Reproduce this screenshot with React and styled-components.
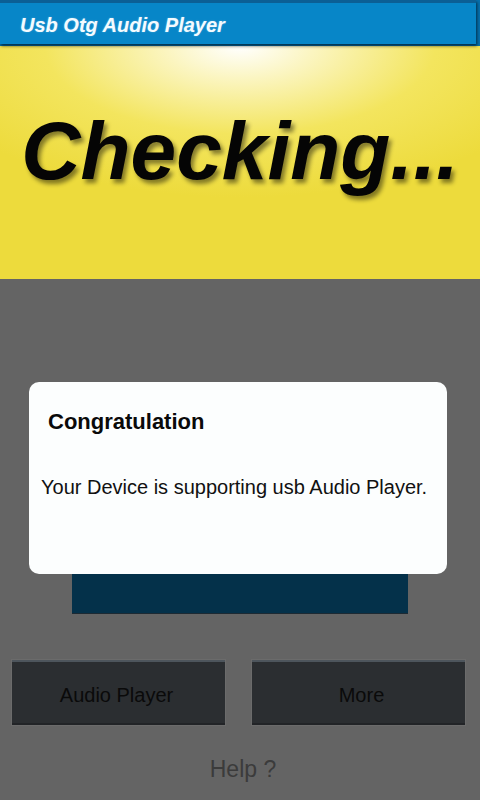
import styled, { createGlobalStyle } from "styled-components";

const GlobalStyle = createGlobalStyle`
  html, body {
    margin: 0;
    padding: 0;
    background: #646464;
  }
  * {
    box-sizing: border-box;
  }
`;

const Screen = styled.div`
  position: relative;
  width: 480px;
  height: 800px;
  overflow: hidden;
  background: #646464;
  font-family: "Liberation Sans", Arial, sans-serif;
  display: flex;
  flex-direction: column;
`;

const TitleWrap = styled.div`
  height: 46px;
  background: #0570ae;
  position: relative;
  z-index: 2;
`;

const TitleBar = styled.header`
  height: 44px;
  margin-right: 4px;
  background: #0786c8;
  border-top: 3px solid #0b5f95;
  box-shadow: 1px 2px 3px rgba(0, 0, 0, 0.6);
  display: flex;
  align-items: center;
  padding: 3px 0 0 20px;
`;

const Title = styled.h1`
  margin: 0;
  font-size: 20px;
  font-weight: bold;
  font-style: italic;
  color: #f4fbff;
  text-shadow: 0 0 2px rgba(255, 255, 255, 0.3);
`;

const Banner = styled.div`
  height: 233px;
  background: radial-gradient(
    ellipse 70% 65% at 50% 0%,
    #ffffff 0%,
    #fbf5c0 22%,
    #f3e55e 58%,
    #eddb3c 100%
  ),
    #eddb3c;
  display: flex;
  align-items: center;
  justify-content: center;
`;

const BannerText = styled.div`
  font-size: 82px;
  font-weight: bold;
  font-style: italic;
  color: #050505;
  text-shadow: 3px 4px 4px rgba(0, 0, 0, 0.45);
  margin: 0 0 24px 0;
`;

const Content = styled.main`
  flex: 1;
  display: flex;
  flex-direction: column;
  align-items: center;
`;

const CheckPanel = styled.div`
  width: 336px;
  height: 84px;
  margin-top: 251px;
  background: #04314a;
  border-bottom: 1px solid #1d2a33;
`;

const ButtonRow = styled.div`
  width: 100%;
  display: flex;
  gap: 27px;
  padding: 0 0 0 12px;
  margin-top: 46px;
`;

const Button = styled.button`
  flex: 0 0 213px;
  height: 65px;
  margin: 0;
  background: #2b2e31;
  border: none;
  border-top: 2px solid #4d555c;
  border-bottom: 2px solid #222427;
  outline: 1px solid #6b6b6b;
  color: #0a0a0a;
  font-family: "Liberation Sans", Arial, sans-serif;
  font-size: 20px;
  padding: 5px 0 0 0;
  text-indent: ${({ $shift }) => $shift || 0}px;
`;

const Help = styled.div`
  margin-top: 31px;
  margin-left: 6px;
  font-size: 23px;
  color: #3b3b3b;
`;

const Dialog = styled.div`
  position: absolute;
  left: 29px;
  top: 382px;
  width: 418px;
  height: 192px;
  background: #fcfefe;
  border-radius: 10px;
  z-index: 3;
`;

const DialogTitle = styled.h2`
  margin: 0;
  padding: 27px 0 0 19px;
  font-size: 22px;
  font-weight: bold;
  color: #0a0a0a;
`;

const DialogBody = styled.p`
  margin: 0;
  padding: 41px 0 0 12px;
  font-size: 20px;
  color: #111;
`;

export default function App() {
  return (
    <>
      <GlobalStyle />
      <Screen>
        <TitleWrap>
          <TitleBar>
            <Title>Usb Otg Audio Player</Title>
          </TitleBar>
        </TitleWrap>
        <Banner>
          <BannerText>Checking...</BannerText>
        </Banner>
        <Content>
          <CheckPanel />
          <ButtonRow>
            <Button $shift={-4}>Audio Player</Button>
            <Button $shift={6}>More</Button>
          </ButtonRow>
          <Help>Help ?</Help>
        </Content>
        <Dialog>
          <DialogTitle>Congratulation</DialogTitle>
          <DialogBody>Your Device is supporting usb Audio Player.</DialogBody>
        </Dialog>
      </Screen>
    </>
  );
}
